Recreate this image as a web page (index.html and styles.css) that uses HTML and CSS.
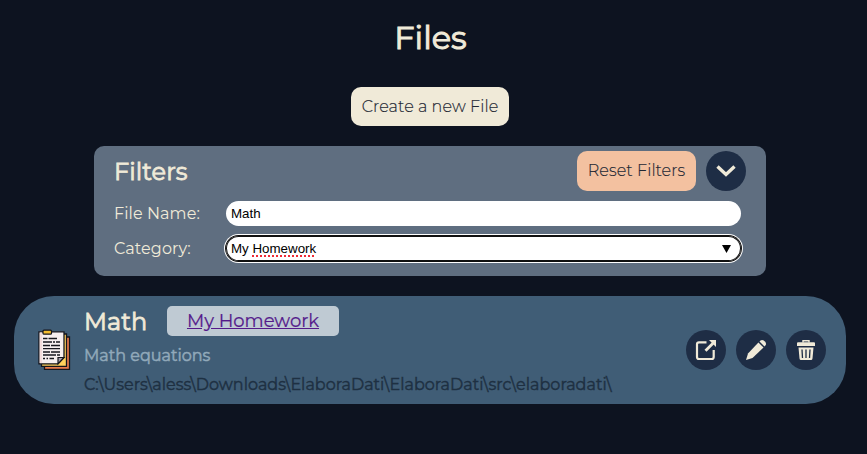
FILE: index.html
```html
<!DOCTYPE html>
<html lang="en">
<head>
<meta charset="utf-8">
<title>Files</title>
<link rel="stylesheet" href="styles.css">
</head>
<body>
<h1>Files</h1>
<button class="btn create">Create a new File</button>
<section class="filters">
  <header class="filters-head">
    <h2>Filters</h2>
    <button class="btn reset">Reset Filters</button>
    <button class="round" aria-label="Collapse"><svg width="40" height="40" viewBox="0 0 40 40"><path d="M11.500 15.500 20 23.500 28.500 15.500" fill="none" stroke="#f0ead8" stroke-width="3.400"/></svg></button>
  </header>
  <div class="row"><label>File Name:</label><div class="field">Math</div></div>
  <div class="row"><label>Category:</label><div class="field focused"><span>My <span class="misspelt">Homework</span></span><svg class="arrow" width="9" height="8" viewBox="0 0 9 8"><path d="M0 0H9L4.500 8Z"/></svg></div></div>
</section>
<article class="file">
  <svg class="doc" width="34" height="42" viewBox="0 0 34 42">
    <path d="M8 8H31.500V40.300H6.500V34Z" fill="#e97b4c" stroke="#15151c" stroke-width="1.300"/>
    <path d="M6 5H28.500V37.300H3.500V31Z" fill="#ffd15c" stroke="#15151c" stroke-width="1.300"/>
    <path d="M1 2.800H26V28.500L20 34.800H1Z" fill="#f7eff0" stroke="#15151c" stroke-width="1.300"/>
    <path d="M1.700 3.500H4V34.100H1.700Z" fill="#f3dcdc"/>
    <path d="M26 28.500H20V34.800Z" fill="#a5a0ad" stroke="#15151c" stroke-width="1.200"/>
    <rect x="5" y="1.200" width="8.500" height="4" rx="1" fill="#f4bc2e" stroke="#15151c" stroke-width="1.200"/>
    <path d="M5 9.500H9.500M10.500 9.500H19M5 13H14M15 13H17M18 13H22M5 16.500H12M13 16.500H22M5 19.700H22M5 23H12M13 23H22M5 26H18M19 26H22M5 29.500H7M8.500 29.500H10M11.500 29.500H16" fill="none" stroke="#18181f" stroke-width="1.300"/>
  </svg>
  <div class="info">
    <div class="heading"><h2>Math</h2><a class="tag" href="#">My Homework</a></div>
    <p class="desc">Math equations</p>
    <p class="path">C:\Users\aless\Downloads\ElaboraDati\ElaboraDati\src\elaboradati\</p>
  </div>
  <div class="actions">
    <button class="round" aria-label="Open"><svg width="40" height="40" viewBox="0 0 40 40"><path d="M20.500 12.300H13a2 2 0 0 0-2 2V27a2 2 0 0 0 2 2H25.700a2 2 0 0 0 2-2V20" fill="none" stroke="#f0ead8" stroke-width="2.200"/><path d="M19.500 20.800 27 13.300" stroke="#f0ead8" stroke-width="2.800"/><path d="M23 10H30V17L28 15 25 12Z" fill="#f0ead8"/></svg></button>
    <button class="round" aria-label="Edit"><svg width="40" height="40" viewBox="0 0 40 40" fill="#f0ead8"><path d="M22.400 12.500 27.500 17.600 16.500 28 10 30 12 23.500Z"/><path d="M23.500 11.400 24.500 10.500Q26.500 9.200 28.600 11.200 31 13.500 29.400 15.600L28.500 16.500Z"/></svg></button>
    <button class="round" aria-label="Delete"><svg width="40" height="40" viewBox="0 0 40 40"><path d="M17 12.500V10.800H23V12.500" fill="none" stroke="#f0ead8" stroke-width="1.400"/><path d="M12 12.300H28Q29 12.300 29 13.300V16H11V13.300Q11 12.300 12 12.300ZM12.500 17.500H27.500L26.500 28.500Q26.300 30 25 30H15Q13.700 30 13.500 28.500Z" fill="#f0ead8"/><path d="M16 19.500 16.500 28M20 19.500V28M24 19.500 23.500 28" stroke="#1e2d45" stroke-width="1.300"/></svg></button>
  </div>
</article>
</body>
</html>
```
FILE: styles.css
```css
* { box-sizing: border-box; }
body { margin: 0; background: #0d1320; color: #f0ead8; font: 16px/20px Montserrat, "Liberation Sans", sans-serif; display: flex; flex-direction: column; align-items: center; padding: 18px 7px 0 0; }
h1, h2, p { margin: 0; white-space: nowrap; }
h1 { font-size: 32px; line-height: 40px; font-weight: 400; -webkit-text-stroke: 1px; margin-bottom: 29px; padding-left: 1px; }
h2 { font-size: 24px; line-height: 32px; font-weight: 400; -webkit-text-stroke: 0.8px; letter-spacing: 0.1px; }
button { border: 0; padding: 0; font: inherit; color: inherit; }
.btn { height: 40px; border-radius: 10px; color: #222733; font-weight: 300; -webkit-text-stroke: 0.15px; letter-spacing: 0.08px; white-space: nowrap; }
.create { width: 158px; height: 39px; background: #f0ead8; margin-bottom: 20px; }
.filters { width: 672px; height: 130px; background: #5f6e80; border-radius: 10px; padding: 5px 20px 0; }
.filters-head { display: flex; align-items: center; gap: 10px; height: 40px; margin-bottom: 10px; }
.filters-head h2 { flex: 1; padding-top: 2px; }
.reset { width: 119px; background: #f3c1a0; }
.round { width: 40px; height: 40px; border-radius: 50%; background: #1e2d45; flex: none; }
.round svg { display: block; }
.row { display: flex; align-items: center; height: 25px; margin-bottom: 10px; }
.row label { width: 112px; white-space: nowrap; letter-spacing: 0.08px; }
.field { width: 515px; height: 25px; background: #fff; border-radius: 13px; color: #000; font: 13.333px/25px "Liberation Sans", sans-serif; padding: 0 10px 0 5px; display: flex; align-items: center; justify-content: space-between; }
.focused { box-shadow: inset 0 0 0 1px #101010, 0 0 0 1px #101010, 0 0 0 2px #fff; }
.misspelt { text-decoration: underline dotted #f02a35 1.5px; text-underline-offset: 2px; }
.file { width: 832px; height: 108px; margin-top: 20px; border-radius: 40px; background: #405d76; display: flex; align-items: center; padding: 0 20px 0 24px; }
.doc { flex: none; }
.info { flex: 1; align-self: stretch; padding: 10px 0 0 12px; }
.heading { display: flex; height: 30px; margin-bottom: 10px; }
.heading h2 { width: 83px; }
.tag { width: 172px; height: 30px; line-height: 30px; border-radius: 5px; background: #bfcad3; color: #551a8b; font-size: 18px; -webkit-text-stroke: 0.2px; text-align: center; white-space: nowrap; }
.desc { -webkit-text-stroke: 0.5px; color: #91a9ba; margin-bottom: 9px; }
.path { -webkit-text-stroke: 0.4px; color: #1e3042; }
.actions { display: flex; gap: 10px; }
```
